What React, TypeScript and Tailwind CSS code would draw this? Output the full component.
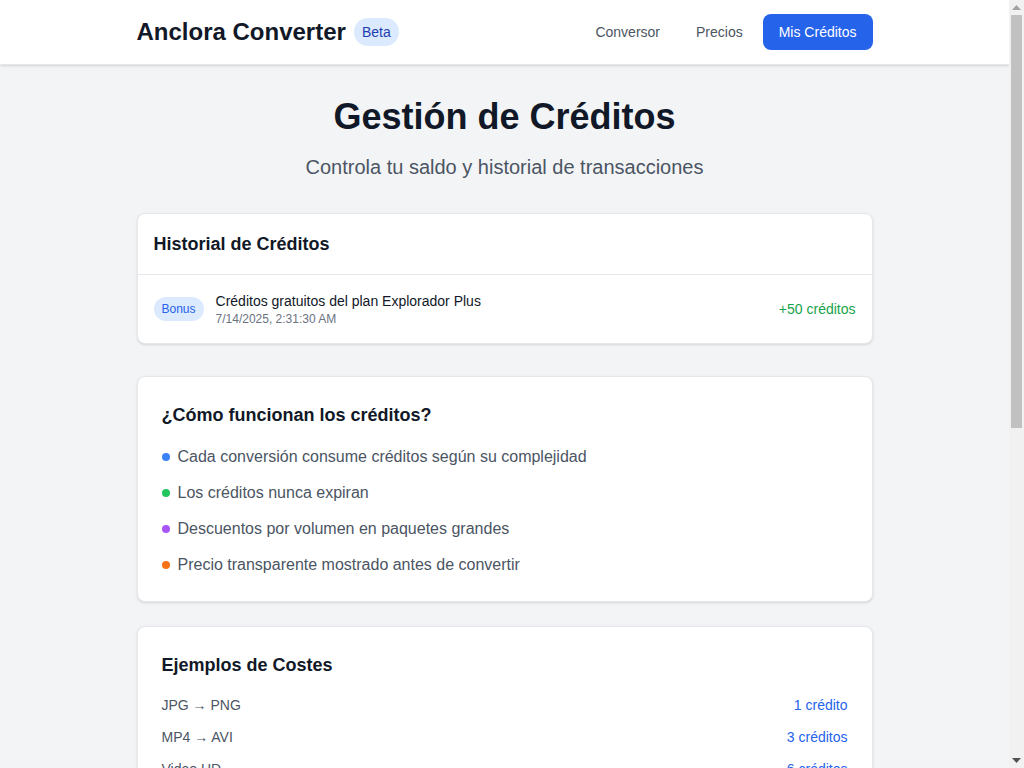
import React from 'react'

const features = [
  { color: 'bg-[#3b82f6]', text: 'Cada conversión consume créditos según su complejidad' },
  { color: 'bg-[#22c55e]', text: 'Los créditos nunca expiran' },
  { color: 'bg-[#a855f7]', text: 'Descuentos por volumen en paquetes grandes' },
  { color: 'bg-[#f97316]', text: 'Precio transparente mostrado antes de convertir' },
]

const costs = [
  { label: 'JPG → PNG', cost: '1 crédito' },
  { label: 'MP4 → AVI', cost: '3 créditos' },
  { label: 'Video HD', cost: '6 créditos' },
  { label: 'PDF → DOCX', cost: '2 créditos' },
  { label: 'WAV → MP3', cost: '1 crédito' },
]

// page scrollbar, as the browser shows it in the reference
function Scrollbar() {
  return (
    <div className="w-[15px] shrink-0 h-full bg-[#f1f1f1] flex flex-col">
      <div className="h-[15px] flex items-center justify-center">
        <svg width="9" height="5" viewBox="0 0 9 5">
          <path d="M0 5 L4.5 0 L9 5 Z" fill="#a3a3a3" />
        </svg>
      </div>
      <div className="flex-1 px-[2px]">
        <div className="h-[413px] bg-[#c1c1c1]" />
      </div>
      <div className="h-[15px] flex items-center justify-center">
        <svg width="9" height="5" viewBox="0 0 9 5">
          <path d="M0 0 L9 0 L4.5 5 Z" fill="#505050" />
        </svg>
      </div>
    </div>
  )
}

export default function App() {
  return (
    <div className="h-screen flex overflow-hidden bg-[#f3f4f6]" style={{ fontFamily: '"Liberation Sans", Arial, sans-serif' }}>
      <div className="flex-1 min-w-0 overflow-hidden">
        {/* Header */}
        <header className="bg-white shadow-sm border-b border-[#e5e7eb]">
          <div className="max-w-3xl mx-auto px-4 h-16 flex items-center justify-between">
            <div className="flex items-center">
              <h1 className="text-2xl font-bold text-[#111827]">Anclora Converter</h1>
              <span className="ml-2 px-2 py-1 rounded-full bg-[#dbeafe] text-[#1e40af] text-sm">Beta</span>
            </div>
            <nav className="flex items-center gap-1">
              <button className="px-4 py-2 rounded-lg text-sm text-[#4b5563] hover:text-gray-900">Conversor</button>
              <button className="px-4 py-2 rounded-lg text-sm text-[#4b5563] hover:text-gray-900">Precios</button>
              <button className="px-4 py-2 rounded-lg text-sm bg-[#2563eb] text-white">Mis Créditos</button>
            </nav>
          </div>
        </header>

        <main className="max-w-3xl mx-auto px-4 py-8">
          <div className="text-center mb-8">
            <h2 className="text-4xl font-bold text-[#111827] mb-4">Gestión de Créditos</h2>
            <p className="text-xl text-[#4b5563]">Controla tu saldo y historial de transacciones</p>
          </div>

          {/* Historial */}
          <div className="bg-white rounded-lg border border-[#e5e7eb] shadow-sm mb-8">
            <div className="p-4 border-b border-[#e5e7eb]">
              <h3 className="text-lg font-semibold text-[#111827]">Historial de Créditos</h3>
            </div>
            <div className="p-4 flex items-center justify-between">
              <div className="flex items-center gap-3">
                <span className="px-2 py-1 rounded-full bg-[#dbeafe] text-[#2563eb] text-xs">Bonus</span>
                <div>
                  <p className="text-sm text-[#111827]">Créditos gratuitos del plan Explorador Plus</p>
                  <p className="text-xs text-[#6b7280]">7/14/2025, 2:31:30 AM</p>
                </div>
              </div>
              <span className="text-sm text-[#16a34a]">+50 créditos</span>
            </div>
          </div>

          <div className="flex flex-col gap-6">
            <div className="bg-white rounded-lg border border-[#e5e7eb] shadow-sm p-6">
              <h3 className="text-lg font-semibold text-[#111827] mb-4">¿Cómo funcionan los créditos?</h3>
              <ul className="space-y-3">
                {features.map((f) => (
                  <li key={f.text} className="flex items-center gap-2 text-[#4b5563]">
                    <span className={`w-2 h-2 rounded-full shrink-0 ${f.color}`} />
                    {f.text}
                  </li>
                ))}
              </ul>
            </div>

            <div className="bg-white rounded-lg border border-[#e5e7eb] shadow-sm p-6">
              <h3 className="text-lg font-semibold text-[#111827] mb-4">Ejemplos de Costes</h3>
              <div className="space-y-3">
                {costs.map((c) => (
                  <div key={c.label} className="flex items-center justify-between text-sm">
                    <span className="text-[#4b5563]">{c.label}</span>
                    <span className="text-[#2563eb]">{c.cost}</span>
                  </div>
                ))}
              </div>
            </div>
          </div>
        </main>
      </div>
      <Scrollbar />
    </div>
  )
}
